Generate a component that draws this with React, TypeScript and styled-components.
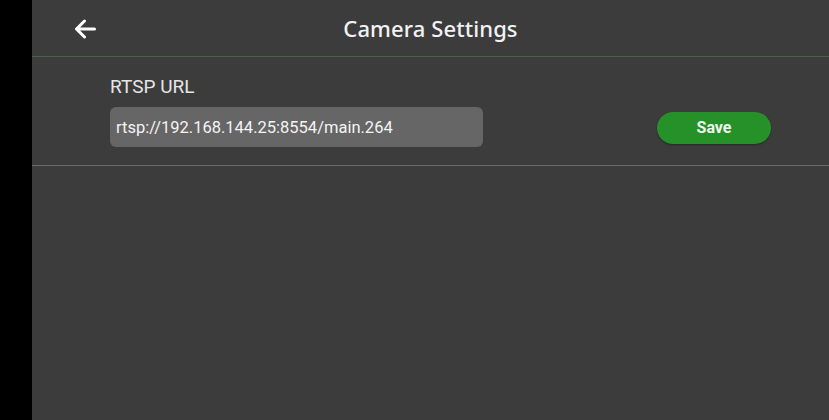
import React, { FC, useState } from "react";
import styled, { createGlobalStyle } from "styled-components";

const GlobalStyle = createGlobalStyle`
  html, body {
    margin: 0;
    padding: 0;
    background: #000;
  }
  * {
    box-sizing: border-box;
  }
`;

const Screen = styled.div`
  display: flex;
  width: 829px;
  height: 420px;
  background: #000;
  overflow: hidden;
`;

const Cutout = styled.div`
  width: 32px;
  flex-shrink: 0;
  background: #000;
`;

const Main = styled.div`
  flex: 1;
  display: flex;
  flex-direction: column;
  background: #3c3c3c;
`;

const Header = styled.header`
  position: relative;
  height: 57px;
  display: flex;
  align-items: center;
  justify-content: center;
  border-bottom: 1px solid #4b5d4f;
`;

const BackButton = styled.button`
  position: absolute;
  left: 40px;
  top: 17px;
  width: 26px;
  height: 24px;
  padding: 0;
  border: none;
  background: transparent;
  display: flex;
  align-items: center;
  justify-content: center;
  cursor: pointer;
`;

const Title = styled.h1`
  margin: 0;
  margin-top: -1px;
  font-family: "Noto Sans", "Open Sans", sans-serif;
  font-weight: 500;
  font-size: 22px;
  color: #f2f2f2;
  letter-spacing: 0.1px;
`;

const Section = styled.section`
  padding: 19px 58px 0 78px;
  border-bottom: 1px solid #6a6a6a;
  height: 109px;
`;

const Label = styled.label`
  display: block;
  font-family: Roboto, "Liberation Sans", sans-serif;
  font-size: 19px;
  color: #e6e6e6;
  line-height: 22px;
  margin-bottom: 9px;
`;

const Row = styled.div`
  display: flex;
  align-items: center;
  justify-content: space-between;
`;

const UrlInput = styled.input`
  width: 373px;
  height: 40px;
  border: none;
  outline: none;
  border-radius: 6px;
  background: #666666;
  color: #f4f4f4;
  font-family: Roboto, "Liberation Sans", sans-serif;
  font-size: 16.5px;
  padding: 0 6px;
`;

const SaveButton = styled.button`
  width: 114px;
  height: 32px;
  margin-top: 1px;
  border: none;
  border-radius: 16px;
  background: #279129;
  color: #eef6ee;
  font-family: Roboto, "Liberation Sans", sans-serif;
  font-weight: 700;
  font-size: 16px;
  box-shadow: 0 1px 2px rgba(0, 0, 0, 0.35);
  cursor: pointer;
`;

const BackArrow: FC = () => (
  <svg width="22" height="20" viewBox="0 0 22 20" fill="none">
    <path
      d="M20.5 10H3M10.5 2L2.5 10L10.5 18"
      stroke="#ffffff"
      strokeWidth="3"
      strokeLinecap="round"
      strokeLinejoin="round"
    />
  </svg>
);

const App: FC = () => {
  const [url, urlSet] = useState("rtsp://192.168.144.25:8554/main.264");

  return (
    <>
      <GlobalStyle />
      <Screen>
        <Cutout />
        <Main>
          <Header>
            <BackButton aria-label="Back">
              <BackArrow />
            </BackButton>
            <Title>Camera Settings</Title>
          </Header>
          <Section>
            <Label htmlFor="rtsp">RTSP URL</Label>
            <Row>
              <UrlInput
                id="rtsp"
                value={url}
                onChange={(e) => urlSet(e.target.value)}
              />
              <SaveButton>Save</SaveButton>
            </Row>
          </Section>
        </Main>
      </Screen>
    </>
  );
};

export default App;
